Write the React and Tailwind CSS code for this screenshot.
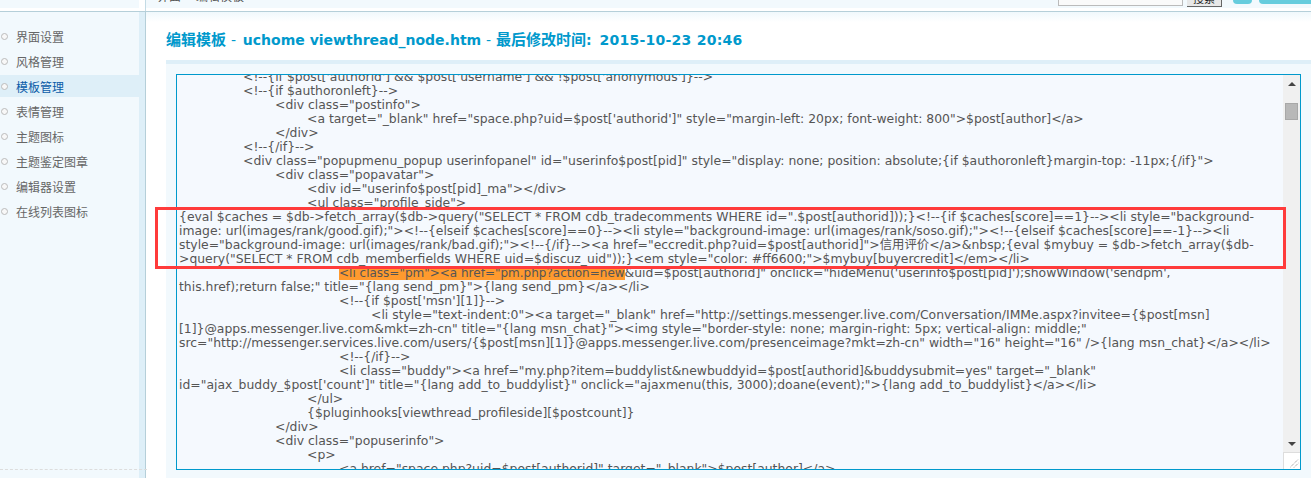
const menu = ['界面设置', '风格管理', '模板管理', '表情管理', '主题图标', '主题鉴定图章', '编辑器设置', '在线列表图标'];

// indent classes follow the tabs of the template source
const I0 = 'pl-0';
const I2 = 'pl-[64px]';
const I3 = 'pl-[96px]';
const I4 = 'pl-[128px]';
const I5 = 'pl-[160px]';
const I6 = 'pl-[192px]';

const codeLines = [
  [I2, `<!--{if $post['authorid'] && $post['username'] && !$post['anonymous']}-->`],
  [I2, `<!--{if $authoronleft}-->`],
  [I3, `<div class="postinfo">`],
  [I4, `<a target="_blank" href="space.php?uid=$post['authorid']" style="margin-left: 20px; font-weight: 800">$post[author]</a>`],
  [I3, `</div>`],
  [I2, `<!--{/if}-->`],
  [I2, `<div class="popupmenu_popup userinfopanel" id="userinfo$post[pid]" style="display: none; position: absolute;{if $authoronleft}margin-top: -11px;{/if}">`],
  [I3, `<div class="popavatar">`],
  [I4, `<div id="userinfo$post[pid]_ma"></div>`],
  [I4, `<ul class="profile_side">`],
  [I0, `{eval $caches = $db->fetch_array($db->query("SELECT * FROM cdb_tradecomments WHERE id=".$post[authorid]));}<!--{if $caches[score]==1}--><li style="background-`],
  [I0, `image: url(images/rank/good.gif);"><!--{elseif $caches[score]==0}--><li style="background-image: url(images/rank/soso.gif);"><!--{elseif $caches[score]==-1}--><li`],
  [I0, `style="background-image: url(images/rank/bad.gif);"><!--{/if}--><a href="eccredit.php?uid=$post[authorid]">信用评价</a>&nbsp;{eval $mybuy = $db->fetch_array($db-`],
  [I0, `>query("SELECT * FROM cdb_memberfields WHERE uid=$discuz_uid"));}<em style="color: #ff6600;">$mybuy[buyercredit]</em></li>`],
  [I5, `<li class="pm"><a href="pm.php?action=new`, `&uid=$post[authorid]" onclick="hideMenu('userinfo$post[pid]');showWindow('sendpm',`],
  [I0, `this.href);return false;" title="{lang send_pm}">{lang send_pm}</a></li>`],
  [I5, `<!--{if $post['msn'][1]}-->`],
  [I6, `<li style="text-indent:0"><a target="_blank" href="http://settings.messenger.live.com/Conversation/IMMe.aspx?invitee={$post[msn]`],
  [I0, `[1]}@apps.messenger.live.com&mkt=zh-cn" title="{lang msn_chat}"><img style="border-style: none; margin-right: 5px; vertical-align: middle;"`],
  [I0, `src="http://messenger.services.live.com/users/{$post[msn][1]}@apps.messenger.live.com/presenceimage?mkt=zh-cn" width="16" height="16" />{lang msn_chat}</a></li>`],
  [I5, `<!--{/if}-->`],
  [I5, `<li class="buddy"><a href="my.php?item=buddylist&newbuddyid=$post[authorid]&buddysubmit=yes" target="_blank"`],
  [I0, `id="ajax_buddy_$post['count']" title="{lang add_to_buddylist}" onclick="ajaxmenu(this, 3000);doane(event);">{lang add_to_buddylist}</a></li>`],
  [I4, `</ul>`],
  [I4, `{$pluginhooks[viewthread_profileside][$postcount]}`],
  [I3, `</div>`],
  [I3, `<div class="popuserinfo">`],
  [I4, `<p>`],
  [I5, `<a href="space.php?uid=$post[authorid]" target="_blank">$post[author]</a>`],
];

function CodeLine({ indent, text, rest }) {
  if (rest) {
    return (
      <div className={`h-[14px] whitespace-pre ${indent}`}>
        <span className="bg-[#ff9a2e] text-[12px]">{text}</span>
        {rest}
      </div>
    );
  }
  return <div className={`h-[14px] whitespace-pre ${indent}`}>{text}</div>;
}

export default function App() {
  return (
    <div className="relative flex flex-col w-full h-[478px] overflow-hidden bg-white font-['DejaVu_Sans','Noto_Sans_CJK_SC',sans-serif] text-[12px] text-[#666]">
      {/* top bar, cut off by the capture */}
      <div className="flex h-[12px] shrink-0 border-b border-[#b5cfd9]">
        <div className="w-[139px] shrink-0 h-[8px] bg-[#f2f9fd]" />
        <div className="w-[7px] shrink-0 border-r border-[#c3dbe5]" />
        <div className="flex flex-1 items-start h-[8px] bg-[#f2f9fd]">
          <div className="flex items-end h-[4px] overflow-hidden pl-[11px] leading-[14px] text-[#555]">
            <span>界面 » 编辑模板</span>
          </div>
          <div className="flex items-start ml-auto">
            <div className="w-[125px] h-[6px] border-r border-b border-l border-[#bbb] bg-[#fafafa]" />
            <div className="flex items-end justify-center ml-[4px] w-[35px] h-[7px] overflow-hidden border-r border-b border-[#666] bg-[#e8e8e8] leading-[12px] text-[11px] text-[#222]">
              搜索
            </div>
            <div className="ml-[11px] w-[19px] h-[4px] rounded-b-[4px] bg-[#66ccdd]" />
            <div className="ml-[7px] w-[52px] h-[4px] rounded-bl-[4px] bg-[#66ccdd]" />
          </div>
        </div>
      </div>

      <div className="flex flex-1 min-h-0">
        {/* side menu */}
        <aside className="relative flex shrink-0 w-[146px] border-r border-[#b5cfd9]">
          <div className="w-[139px] bg-[#f2f9fd] pt-[13px]">
            {menu.map((item, i) => (
              <div
                key={item}
                className={
                  i === 2
                    ? 'flex items-center h-[22px] mb-[3px] pl-[1px] bg-[#deeff8] text-[#0a5ca8]'
                    : 'flex items-center h-[22px] mb-[3px] pl-[1px]'
                }
              >
                <span className="w-[7px] h-[7px] rounded-full border border-[#bbb] bg-[#f8f8f8]" />
                <span className="ml-[8px] pt-[3px]">{item}</span>
              </div>
            ))}
          </div>
          <div className="w-[6px] bg-[#deeff8]" />
          <div className="absolute left-0 top-[457px] w-[147px] border-t border-dashed border-[#ddd]" />
        </aside>

        {/* main area */}
        <main className="flex flex-col flex-1 min-w-0 bg-gradient-to-b from-[#f0f8fc] to-white to-[10px]">
          <h1 className="h-[48px] pt-[19px] pl-[20px] leading-[18px] text-[14px] font-bold text-[#0099cc] whitespace-pre">
            <span className="text-[15px]">编辑模板</span>
            <span> </span>
            <span className="font-normal">-</span>
            <span className="ml-[2px]"> uchome viewthread_node.htm </span>
            <span className="font-normal">-</span>
            <span> </span>
            <span className="text-[15px]">最后修改时间</span>
            <span>: </span>
            <span className="ml-[3px] tracking-[0.25px]">2015-10-23 20:46</span>
          </h1>
          <div className="flex-1 ml-[20px] border-t-[4px] border-[#deeff8] bg-[#f2f9fd] pt-[10px] pl-[10px] pr-[10px]">
            <div className="flex h-[396px] border border-[#0099cc] bg-[#f5f9fe]">
              <div className="flex-1 min-w-0 overflow-hidden pl-[2px] text-[12.4px]">
                <div className="-mt-[7px] text-[#555]">
                  {codeLines.map(([indent, text, rest], i) => (
                    <CodeLine key={i} indent={indent} text={text} rest={rest} />
                  ))}
                </div>
              </div>
              {/* textarea scrollbar */}
              <div className="flex flex-col shrink-0 w-[17px] bg-[#f0f0f0]">
                <div className="flex justify-center pt-[7px] h-[28px]">
                  <span className="w-0 h-0 border-l-[4px] border-r-[4px] border-b-[4px] border-l-transparent border-r-transparent border-b-[#444]" />
                </div>
                <div className="mx-[2px] h-[17px] border border-[#a8a8a8] bg-[#b8b8b8]" />
                <div className="flex-1" />
                <div className="flex justify-center pt-[11px] h-[21px]">
                  <span className="w-0 h-0 border-l-[4px] border-r-[4px] border-t-[4px] border-l-transparent border-r-transparent border-t-[#444]" />
                </div>
                <div className="flex items-end justify-end h-[17px] border-t border-l border-[#ddd] bg-white">
                  <svg width="9" height="9" viewBox="0 0 9 9" className="mr-[1px] mb-[1px]">
                    <path d="M0 8.5 L8.5 0 M4 8.5 L8.5 4" stroke="#888" strokeWidth="1" strokeDasharray="1 1" fill="none" />
                  </svg>
                </div>
              </div>
            </div>
          </div>
        </main>
      </div>

      {/* red annotation drawn on the screenshot */}
      <div className="absolute left-[155px] top-[207px] w-[1131px] h-[62px] border-[3px] border-[#ff3b3b]" />
    </div>
  );
}
